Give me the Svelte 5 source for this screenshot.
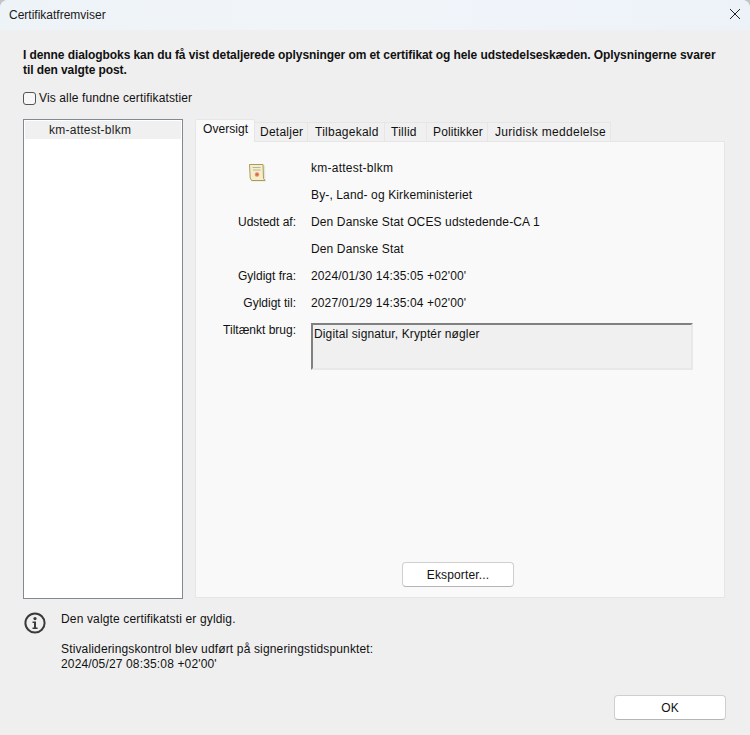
<script>
  const tabs = ['Detaljer', 'Tilbagekald', 'Tillid', 'Politikker', 'Juridisk meddelelse'];
</script>

<div class="window">
  <header class="titlebar">
    <span class="title">Certifikatfremviser</span>
    <svg class="close" width="12" height="12" viewBox="0 0 12 12"><path d="M1 1 L11 11 M11 1 L1 11" stroke="#222" stroke-width="1" fill="none"/></svg>
  </header>
  <div class="content">
    <p class="intro">I denne dialogboks kan du få vist detaljerede oplysninger om et certifikat og hele udstedelseskæden. Oplysningerne svarer<br/>til den valgte post.</p>
    <label class="check"><span class="box"></span>Vis alle fundne certifikatstier</label>
    <div class="main">
      <div class="list"><div class="item">km-attest-blkm</div></div>
      <div class="tabarea">
        <div class="tabs">
          <div class="tab active">Oversigt</div>
          {#each tabs as t}<div class="tab">{t}</div>{/each}
        </div>
        <div class="panel">
          <div class="grid">
            <div class="label icon">
              <svg width="20" height="20" viewBox="0 0 20 20">
                <path d="M2.5 2.5 H17 L17.5 18.5 H3.5 Z" fill="#d8d6c8" opacity="0.6"/>
                <path d="M1.5 1.5 H15 L15.5 15.5 L17 17.5 H3.5 L2.2 15 Z" fill="#f6eecb" stroke="#a89c58" stroke-width="1"/>
                <path d="M4.5 4.5 H12.5 M5 7 H12.5" stroke="#b8b4a2" stroke-width="1"/>
                <circle cx="9" cy="11.5" r="2.2" fill="#e58a6c"/>
                <circle cx="9" cy="11.5" r="0.9" fill="#d9553a"/>
              </svg>
            </div>
            <div class="val first">km-attest-blkm</div>
            <div class="label"></div><div class="val">By-, Land- og Kirkeministeriet</div>
            <div class="label">Udstedt af:</div><div class="val">Den Danske Stat OCES udstedende-CA 1</div>
            <div class="label"></div><div class="val">Den Danske Stat</div>
            <div class="label">Gyldigt fra:</div><div class="val">2024/01/30 14:35:05 +02'00'</div>
            <div class="label">Gyldigt til:</div><div class="val">2027/01/29 14:35:04 +02'00'</div>
            <div class="label">Tiltænkt brug:</div><div class="usage">Digital signatur, Kryptér nøgler</div>
          </div>
          <button class="btn export">Eksporter...</button>
        </div>
      </div>
    </div>
    <div class="status">
      <svg class="info" width="24" height="24" viewBox="0 0 24 24">
        <circle cx="12" cy="12" r="9.6" fill="none" stroke="#3a3a3a" stroke-width="2"/>
        <circle cx="12" cy="7.6" r="1.6" fill="#3a3a3a"/>
        <path d="M9.5 10.5 H13 V16.5 H14.6 V18 H9.5 V16.5 H11 V12 H9.5 Z" fill="#3a3a3a"/>
      </svg>
      <div class="msg">
        <div>Den valgte certifikatsti er gyldig.</div>
        <div class="second">Stivalideringskontrol blev udført på signeringstidspunktet:<br/>2024/05/27 08:35:08 +02'00'</div>
      </div>
    </div>
    <div class="foot"><button class="btn ok">OK</button></div>
  </div>
</div>

<style>
  :global(body) { margin: 0; background: #c4c4c4; }
  .window {
    width: 750px; height: 735px; display: flex; flex-direction: column;
    background: #efefef; border-radius: 8px 8px 0 0; overflow: hidden;
    font-family: "Liberation Sans", Arial, sans-serif; font-size: 12px; color: #111;
    letter-spacing: 0.13px;
  }
  .titlebar {
    height: 30px; flex: none; display: flex; align-items: center; justify-content: space-between;
    padding: 0 9px 0 9px; box-sizing: border-box;
    background: linear-gradient(90deg, #eef3f8, #f1f5fa 50%, #edf2f9);
  }
  .title { font-size: 12px; color: #1a1a1a; letter-spacing: 0; }
  .close { display: block; margin-top: -2px; }
  .content { flex: 1; display: flex; flex-direction: column; padding: 18px 25px 0 23px; min-height: 0; }
  .intro { margin: 0; font-weight: bold; line-height: 15px; white-space: nowrap; letter-spacing: -0.08px; }
  .check { margin-top: 13px; height: 15px; display: flex; align-items: center; gap: 3px; line-height: 15px; }
  .box { width: 11px; height: 11px; border: 1px solid #555; border-radius: 3px; background: #f7f7f7; }
  .main { margin-top: 13px; display: flex; gap: 12px; height: 480px; flex: none; }
  .list { width: 156px; flex: none; background: #fff; border: 1px solid #7f8a93; padding: 1px; height: 476px; }
  .item { height: 18px; line-height: 18px; background: #f0f0f0; padding-left: 24px; color: #222; letter-spacing: 0.25px; }
  .tabarea { flex: 1; display: flex; flex-direction: column; min-width: 0; margin-bottom: 1px; }
  .tabs { display: flex; align-items: flex-end; height: 23px; flex: none; position: relative; z-index: 1; margin-bottom: -1px; }
  .tab {
    height: 20px; line-height: 19px; box-sizing: border-box; background: #f0f0f0;
    border: 1px solid #e6e6e6; border-left: none; white-space: nowrap; overflow: hidden; letter-spacing: 0.25px;
  }
  .tab:nth-child(2) { width: 53px; padding-left: 5px; }
  .tab:nth-child(3) { width: 77px; padding-left: 7px; }
  .tab:nth-child(4) { width: 42px; padding-left: 6px; }
  .tab:nth-child(5) { width: 61px; padding-left: 6px; letter-spacing: 0.13px; }
  .tab:nth-child(6) { width: 123px; padding-left: 7px; letter-spacing: 0.3px; }
  .tab.active {
    width: 60px; height: 23px; line-height: 18px; padding-left: 7px; background: #f9f9f9;
    border: 1px solid #e6e6e6; border-bottom: none; border-radius: 2px 2px 0 0; letter-spacing: 0.05px;
  }
  .panel {
    flex: 1; background: #f9f9f9; border: 1px solid #e6e6e6;
    display: flex; flex-direction: column; align-items: center; padding-bottom: 10px; min-height: 0;
  }
  .grid {
    align-self: stretch; flex: 1; display: grid; grid-template-columns: 100px 382px; column-gap: 15px;
    grid-auto-rows: 27px; align-content: start; padding-top: 14px;
  }
  .label { text-align: right; line-height: 27px; height: 27px; margin-top: -1px; letter-spacing: 0; }
  .label.icon { text-align: left; padding-left: 52px; box-sizing: border-box; margin-top: 7px; line-height: 0; }
  .val { line-height: 27px; height: 27px; margin-top: -1px; white-space: nowrap; }
  .val.first { letter-spacing: 0.25px; }
  .usage {
    height: 47px; box-sizing: border-box; background: #f0f0f0; padding: 2px 1px; line-height: 15px;
    border: 2px solid #e8e8e8; border-top-color: #808080; border-left-color: #808080; margin-top: 5px;
  }
  .btn {
    font: inherit; color: #111; background: #fff; border: 1px solid #cfcfcf; border-bottom-color: #b5b5b5;
    border-radius: 4px; height: 25px; width: 112px; padding: 0; letter-spacing: inherit;
  }
  .export { margin-right: 4px; }
  .status { display: flex; margin-top: 12px; gap: 14px; }
  .info { flex: none; display: block; }
  .msg { line-height: 15px; padding-top: 1px; letter-spacing: 0.15px; }
  .second { margin-top: 15px; }
  .foot { display: flex; justify-content: flex-end; margin-top: 23px; }
  .ok { margin-right: -1px; }
</style>
